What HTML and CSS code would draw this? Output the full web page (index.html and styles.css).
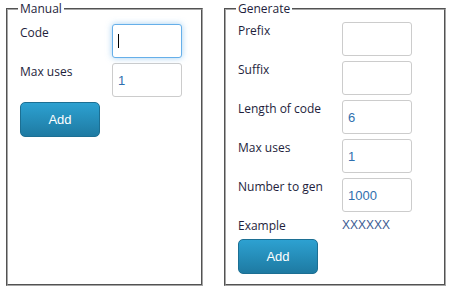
FILE: index.html
```html
<!DOCTYPE html>
<html lang="en">
<head>
    <meta charset="UTF-8">
    <meta name="viewport" content="width=device-width, initial-scale=1.0">
    <title>Codes</title>
    <link rel="stylesheet" href="styles.css">
</head>
<body>
    <div class="panels">
        <fieldset class="box manual">
            <legend>Manual</legend>
            <div class="rows">
                <div class="row">
                    <label for="code">Code</label>
                    <div class="field">
                        <input type="text" id="code" class="input focused">
                        <span class="caret"></span>
                    </div>
                </div>
                <div class="row">
                    <label for="uses">Max uses</label>
                    <input type="text" id="uses" class="input" value="1">
                </div>
                <button class="button">Add</button>
            </div>
        </fieldset>

        <fieldset class="box generate">
            <legend>Generate</legend>
            <div class="rows">
                <div class="row">
                    <label for="prefix">Prefix</label>
                    <input type="text" id="prefix" class="input">
                </div>
                <div class="row">
                    <label for="suffix">Suffix</label>
                    <input type="text" id="suffix" class="input">
                </div>
                <div class="row">
                    <label for="length">Length of code</label>
                    <input type="text" id="length" class="input" value="6">
                </div>
                <div class="row">
                    <label for="max">Max uses</label>
                    <input type="text" id="max" class="input" value="1">
                </div>
                <div class="row">
                    <label for="count">Number to gen</label>
                    <input type="text" id="count" class="input" value="1000">
                </div>
                <div class="row example">
                    <label>Example</label>
                    <span class="sample">XXXXXX</span>
                </div>
                <button class="button">Add</button>
            </div>
        </fieldset>
    </div>
</body>
</html>
```

FILE: styles.css
```css
body { margin: 0; background: #fff; font-family: "Open Sans", "Liberation Sans", sans-serif; color: #1e1e3c; }
.panels { display: flex; gap: 21px; padding: 1px 6px 0; }

/* FIELDSETS */
.box {
    box-sizing: border-box;
    height: 285px;
    margin: 0;
    border: 2px groove #a6a6a6;
    padding: 0 12px;
}
.manual { width: 197px; padding-top: 8px; }
.generate { width: 222px; padding-top: 6px; }
legend { font-size: 12px; line-height: 15px; padding: 0 2px; margin-left: -2px; color: #1e1e3c; }

/* ROWS */
.rows { display: flex; flex-direction: column; gap: 5px; align-items: flex-start; }
.row { display: flex; align-items: flex-start; }
.row label { font-size: 12px; line-height: 15px; padding-top: 1px; }
.manual .row label { width: 92px; }
.generate .row label { width: 104px; }

.field { position: relative; }
.input {
    box-sizing: border-box;
    width: 70px;
    height: 34px;
    border: 1px solid #cccccc;
    border-radius: 3px;
    padding: 0 5px;
    font-family: "Liberation Sans", Arial, sans-serif;
    font-size: 13px;
    color: #2f6fae;
    outline: none;
    margin: 0;
}
.input.focused { border-color: #66afe9; box-shadow: 0 0 6px rgba(102, 175, 233, 0.6); }
.caret { position: absolute; left: 6px; top: 10px; width: 1px; height: 14px; background: #000; }

.example { height: 17px; }
.sample { font-family: "Liberation Sans", Arial, sans-serif; font-size: 12px; color: #3b5b93; padding-top: 1px; }

/* BOUTON */
.button {
    box-sizing: border-box;
    width: 80px;
    height: 35px;
    border: 1px solid #1c6f93;
    border-radius: 5px;
    background: linear-gradient(#2da1d1, #1e7aa2);
    color: #fff;
    font-family: "Liberation Sans", Arial, sans-serif;
    font-size: 13px;
    cursor: pointer;
    margin: 0;
}
```
